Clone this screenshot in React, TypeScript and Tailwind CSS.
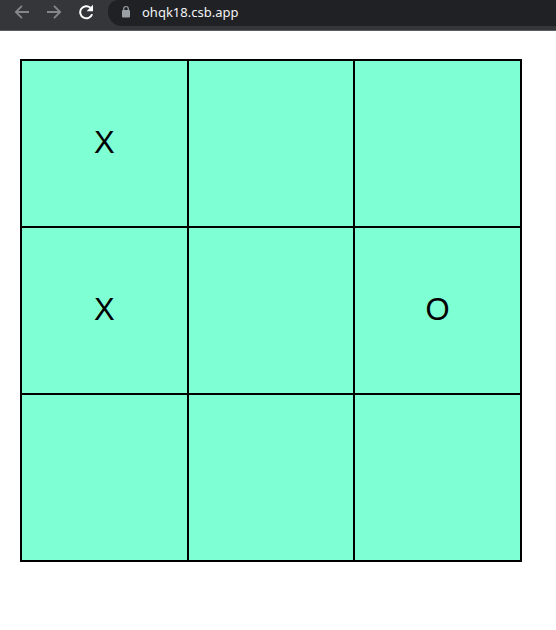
import { useState } from "react";

type Mark = "X" | "O" | "";

const START: Mark[] = ["X", "", "", "X", "", "O", "", "", ""];

function BrowserBar() {
  return (
    <header className="flex h-[31px] items-start overflow-hidden border-b border-[#5b5c5f] bg-[#35363a]">
      <nav className="flex h-6 items-center gap-4 pr-3.5 pl-3.5">
        <button type="button" aria-label="Back" className="text-[#85868a]">
          <svg viewBox="0 0 16 16" className="size-4" fill="none" stroke="currentColor" strokeWidth="1.8">
            <path d="M15 8H2M8 1.8 1.8 8 8 14.2" />
          </svg>
        </button>
        <button type="button" aria-label="Forward" className="text-[#85868a]">
          <svg viewBox="0 0 16 16" className="size-4" fill="none" stroke="currentColor" strokeWidth="1.8">
            <path d="M1 8h13M8 1.8 14.2 8 8 14.2" />
          </svg>
        </button>
        <button type="button" aria-label="Reload" className="text-white">
          <svg viewBox="0 0 16 16" className="size-4">
            <path
              d="M14.1 10.2A6.1 6.1 0 1 1 12.4 3.7"
              fill="none"
              stroke="currentColor"
              strokeWidth="2"
            />
            <path d="M15 .8v6.4H8.6z" fill="currentColor" />
          </svg>
        </button>
      </nav>
      <div className="flex h-[26px] flex-1 items-center gap-2.5 rounded-bl-[14px] rounded-tl-[10px] bg-[#202124] pb-0.5 pl-3">
        <svg viewBox="0 0 12 14" className="h-3.5 w-3 shrink-0 text-[#9aa0a6]" aria-hidden="true">
          <rect x="2" y="5" width="8" height="7.6" rx="1" fill="currentColor" />
          <path d="M3.7 5.5V3.8a2.3 2.3 0 0 1 4.6 0v1.7" fill="none" stroke="currentColor" strokeWidth="1.2" />
        </svg>
        <input
          aria-label="Address"
          defaultValue="ohqk18.csb.app"
          className="h-6 min-w-0 flex-1 bg-transparent font-['Noto_Sans',sans-serif] text-[13px] text-[#f1f3f4] outline-none"
        />
      </div>
    </header>
  );
}

export default function App() {
  const [cells, setCells] = useState<Mark[]>(START);

  const play = (index: number) => {
    if (cells[index]) return;
    const filled = cells.filter(Boolean).length;
    setCells(cells.map((mark, i) => (i === index ? (filled % 2 ? "O" : "X") : mark)));
  };

  return (
    <div className="min-h-screen bg-white">
      <BrowserBar />
      <main className="px-5 pt-7 pb-5">
        <div className="grid aspect-[502/503] w-full max-w-[502px] grid-cols-3 grid-rows-3 gap-0.5 bg-black p-0.5">
          {cells.map((mark, i) => (
            <button
              key={i}
              type="button"
              aria-label={`Cell ${i + 1} ${mark}`}
              onClick={() => play(i)}
              className="flex items-center justify-center bg-[#7fffd4] font-['Liberation_Sans',Arial,sans-serif] text-[31px] text-black"
            >
              {mark}
            </button>
          ))}
        </div>
      </main>
    </div>
  );
}
